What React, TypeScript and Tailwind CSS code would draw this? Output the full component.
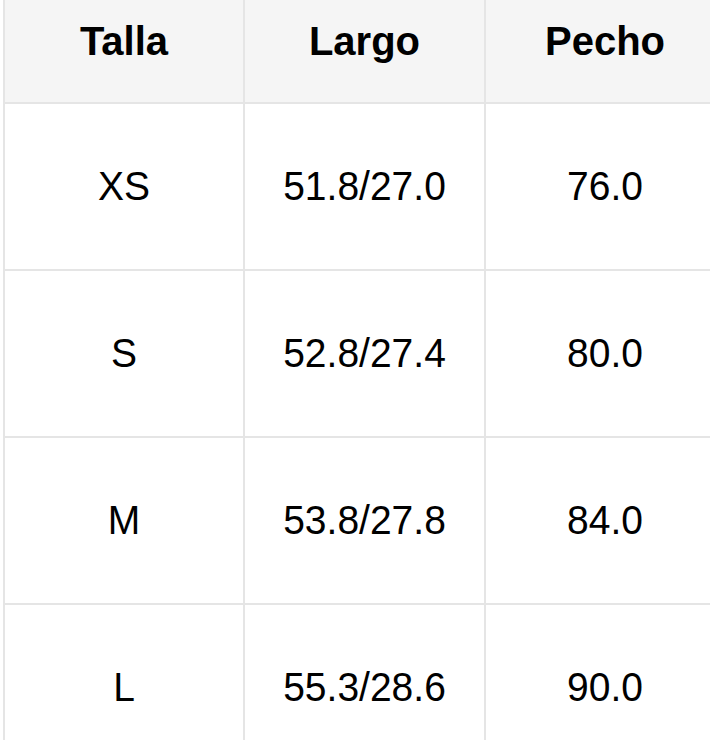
const headers = ['Talla', 'Largo', 'Pecho'];

const rows = [
  ['XS', '51.8/27.0', '76.0'],
  ['S', '52.8/27.4', '80.0'],
  ['M', '53.8/27.8', '84.0'],
  ['L', '55.3/28.6', '90.0'],
];

export default function App() {
  return (
    <div className="w-[710px] h-[740px] overflow-hidden bg-white pl-[3px] font-['Liberation_Sans',Arial,sans-serif] text-black">
      <div className="w-[720px] border-l-2 border-[#e5e5e5]">
        {/* header */}
        <div className="grid grid-cols-[240px_241px_238px] h-[104px] bg-[#f5f5f5] border-b-2 border-[#e5e5e5]">
          {headers.map((h, i) => (
            <div
              key={h}
              className={`flex items-center justify-center pb-[20px] text-[40px] font-bold ${
                i < 2 ? 'border-r-2 border-[#e5e5e5]' : ''
              }`}
            >
              {h}
            </div>
          ))}
        </div>

        {rows.map((r) => (
          <div key={r[0]} className="grid grid-cols-[240px_241px_238px] h-[167px] border-b-2 border-[#e5e5e5]">
            {r.map((v, i) => (
              <div
                key={i}
                className={`flex items-center justify-center text-[39px] ${
                  i < 2 ? 'border-r-2 border-[#e5e5e5]' : ''
                }`}
              >
                <span className="scale-y-[1.06]">{v}</span>
              </div>
            ))}
          </div>
        ))}
      </div>
    </div>
  );
}
